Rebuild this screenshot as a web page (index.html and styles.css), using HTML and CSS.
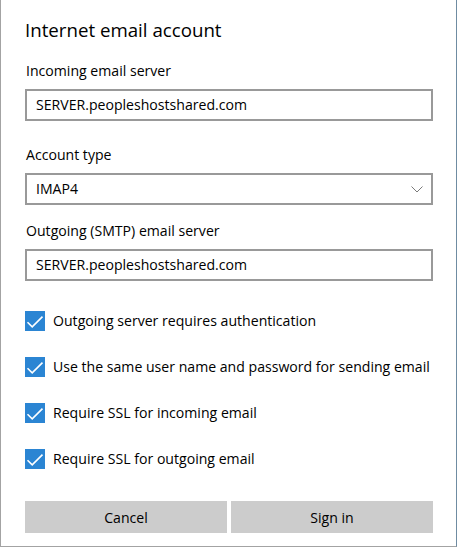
FILE: index.html
```html
<!DOCTYPE html>
<html lang="en">
<head>
<meta charset="utf-8">
<title>Internet email account</title>
<link rel="stylesheet" href="styles.css">
</head>
<body>
<div class="window">
  <h1 class="title">Internet email account</h1>
  <div class="field">
    <div class="label">Incoming email server</div>
    <div class="input">SERVER.peopleshostshared.com</div>
  </div>
  <div class="field field-type">
    <div class="label">Account type</div>
    <div class="input select">
      <span>IMAP4</span>
      <svg class="chevron" width="12" height="7" viewBox="0 0 12 7"><path d="M0.5 0.5 L6 6 L11.5 0.5" fill="none" stroke="#7a7a7a" stroke-width="1"/></svg>
    </div>
  </div>
  <div class="field field-out">
    <div class="label">Outgoing (SMTP) email server</div>
    <div class="input">SERVER.peopleshostshared.com</div>
  </div>
  <div class="checks">
    <div class="check"><span class="box"><svg width="20" height="20" viewBox="0 0 20 20"><path d="M2.5 11.2 L7.2 15.8 L17.5 5.6" fill="none" stroke="#fff" stroke-width="1.6"/></svg></span><span class="check-text">Outgoing server requires authentication</span></div>
    <div class="check"><span class="box"><svg width="20" height="20" viewBox="0 0 20 20"><path d="M2.5 11.2 L7.2 15.8 L17.5 5.6" fill="none" stroke="#fff" stroke-width="1.6"/></svg></span><span class="check-text">Use the same user name and password for sending email</span></div>
    <div class="check"><span class="box"><svg width="20" height="20" viewBox="0 0 20 20"><path d="M2.5 11.2 L7.2 15.8 L17.5 5.6" fill="none" stroke="#fff" stroke-width="1.6"/></svg></span><span class="check-text">Require SSL for incoming email</span></div>
    <div class="check"><span class="box"><svg width="20" height="20" viewBox="0 0 20 20"><path d="M2.5 11.2 L7.2 15.8 L17.5 5.6" fill="none" stroke="#fff" stroke-width="1.6"/></svg></span><span class="check-text">Require SSL for outgoing email</span></div>
  </div>
  <div class="buttons">
    <button class="btn">Cancel</button>
    <button class="btn">Sign in</button>
  </div>
</div>
</body>
</html>
```

FILE: styles.css
```css
html, body {
  margin: 0;
  padding: 0;
  background: #ffffff;
}

body {
  font-family: "Open Sans", "Noto Sans", sans-serif;
  color: #000000;
}

.window {
  box-sizing: border-box;
  width: 457px;
  height: 547px;
  padding: 16px 23px 13px 24px;
  border: 1px solid #a3a3a3;
  border-top: none;
  border-right-color: #6f8ca2;
  background: #ffffff;
  display: flex;
  flex-direction: column;
}

.title {
  margin: 0 0 17px 0;
  font-size: 18.7px;
  font-weight: 400;
  line-height: 28px;
}

.field {
  display: flex;
  flex-direction: column;
}

.field-type {
  margin-top: 24px;
}

.field-out {
  margin-top: 16px;
}

.label {
  font-size: 14.1px;
  line-height: 20px;
  margin-bottom: 8px;
  margin-left: 1px;
}

.input {
  box-sizing: border-box;
  height: 32px;
  border: 2px solid #999999;
  padding: 0 9px;
  font-size: 14.1px;
  line-height: 28px;
}

.select {
  display: flex;
  align-items: center;
  justify-content: space-between;
  padding-right: 8px;
}

.chevron {
  display: block;
}

.checks {
  margin-top: 30px;
  display: flex;
  flex-direction: column;
  gap: 26px;
}

.check {
  display: flex;
  align-items: center;
  height: 20px;
  gap: 8px;
}

.box {
  width: 20px;
  height: 20px;
  background: #2b85d3;
  display: block;
  flex: none;
}

.box svg {
  display: block;
}

.check-text {
  font-size: 14.1px;
  line-height: 20px;
  white-space: nowrap;
}

.buttons {
  margin-top: 32px;
  display: flex;
  gap: 4px;
}

.btn {
  flex: 1;
  height: 32px;
  border: none;
  background: #cccccc;
  font-family: inherit;
  font-size: 14.1px;
  color: #000000;
  padding: 0;
}
```
